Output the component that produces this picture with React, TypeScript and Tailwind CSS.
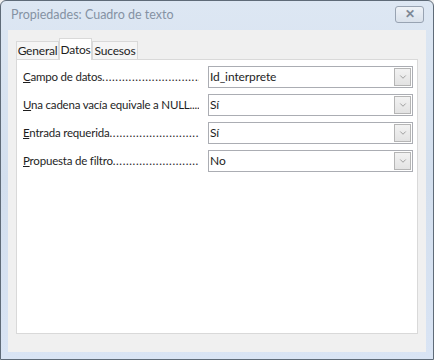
import { ChevronDown } from "lucide-react";

const font = { fontFamily: 'Lato, "Liberation Sans", sans-serif' };

const rows = [
  { key: "C", rest: "ampo de datos", value: "Id_interprete" },
  { key: "U", rest: "na cadena vacía equivale a NULL...", value: "Sí" },
  { key: "E", rest: "ntrada requerida", value: "Sí" },
  { key: "P", rest: "ropuesta de filtro", value: "No" },
];

const dots = ".".repeat(60);

function Combo({ value }: { value: string }) {
  return (
    <div className="flex h-[22px] w-[205px] shrink-0 items-stretch border border-[#abadb3] bg-white">
      <div className="flex flex-1 items-center pl-[1px] text-[12px] tracking-[-0.1px] text-[#1e1e1e]">{value}</div>
      <div className="m-[1px] flex w-[17px] items-center justify-center border border-[#b5b5b5] bg-gradient-to-b from-[#f2f2f2] to-[#e3e3e3]">
        <ChevronDown className="h-[10px] w-[10px] text-[#7a7a7a]" strokeWidth={1.6} />
      </div>
    </div>
  );
}

export default function App() {
  return (
    <div className="h-[360px] w-[434px] bg-[#f0f0f0]" style={font}>
      <div className="flex h-[360px] w-[434px] flex-col rounded-t-[6px] border border-[#5f6b78] bg-gradient-to-b from-[#dde7f3] via-[#d3dfee] to-[#d9e4f4]">
        <div className="flex h-[29px] items-center justify-between pl-[10px] pr-[9px]">
          <span className="text-[12.5px] text-[#8592a3]">Propiedades: Cuadro de texto</span>
          <div className="mt-[-3px] flex h-[17px] w-[29px] items-center justify-center rounded-[3px] border border-[#98a3b2] bg-gradient-to-b from-[#eef2f7] to-[#d9e1eb]">
            <span className="text-[12px] font-bold leading-none text-[#7d8896]">✕</span>
          </div>
        </div>
        <div className="mx-[7px] mb-[7px] flex flex-1 flex-col bg-[#f0f0f0] px-[8px] pt-[8px] pb-[18px]">
          <div className="flex h-[21px] items-end text-[12px] tracking-[-0.2px] text-[#1e1e1e]">
            <div className="flex h-[18px] w-[43px] items-center justify-center border border-b-0 border-[#d9d9d9] bg-[#f5f5f5]">General</div>
            <div className="relative z-10 mb-[-1px] flex h-[22px] w-[33px] items-center justify-center border border-b-0 border-[#d9d9d9] bg-white">Datos</div>
            <div className="flex h-[18px] w-[46px] items-center justify-center border border-b-0 border-[#d9d9d9] bg-[#f5f5f5]">Sucesos</div>
          </div>
          <div className="flex flex-1 flex-col gap-[6px] border border-[#d9d9d9] bg-white pt-[6px] pl-[6px] pr-[4px]">
            {rows.map((r) => (
              <div key={r.rest} className="flex h-[22px] items-center justify-between">
                <div className="w-[176px] overflow-hidden whitespace-nowrap text-[11.5px] tracking-[-0.2px] text-[#1e1e1e]">
                  <span className="underline">{r.key}</span>
                  {r.rest}
                  <span className="tracking-[0.6px]">{dots}</span>
                </div>
                <Combo value={r.value} />
              </div>
            ))}
          </div>
        </div>
      </div>
    </div>
  );
}
